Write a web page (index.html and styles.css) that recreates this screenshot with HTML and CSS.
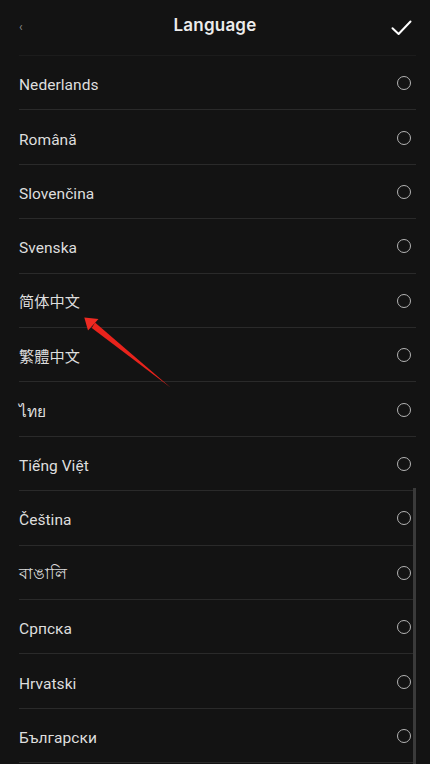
FILE: index.html
```html
<!DOCTYPE html>
<html lang="en">
<head>
<meta charset="utf-8">
<title>Language</title>
<link rel="stylesheet" href="styles.css">
</head>
<body>
<div class="screen">
  <header class="topbar">
    <span class="back">&#8249;</span>
    <h1 class="title">Language</h1>
    <svg class="done" width="22" height="18" viewBox="0 0 22 18"><path d="M2.5 9.3 L8.6 15 L20.5 2.5" fill="none" stroke="#ffffff" stroke-width="2" stroke-linecap="round" stroke-linejoin="round"/></svg>
  </header>
  <ul class="list">
    <li class="row"><span class="name">Nederlands</span><span class="radio"></span></li>
    <li class="row"><span class="name">Română</span><span class="radio"></span></li>
    <li class="row"><span class="name">Slovenčina</span><span class="radio"></span></li>
    <li class="row"><span class="name">Svenska</span><span class="radio"></span></li>
    <li class="row"><span class="name cjk">简体中文</span><span class="radio"></span></li>
    <li class="row"><span class="name cjk tc">繁體中文</span><span class="radio"></span></li>
    <li class="row"><span class="name">ไทย</span><span class="radio"></span></li>
    <li class="row"><span class="name">Tiếng Việt</span><span class="radio"></span></li>
    <li class="row"><span class="name">Čeština</span><span class="radio"></span></li>
    <li class="row"><span class="name">বাঙালি</span><span class="radio"></span></li>
    <li class="row"><span class="name">Српска</span><span class="radio"></span></li>
    <li class="row"><span class="name">Hrvatski</span><span class="radio"></span></li>
    <li class="row"><span class="name">Български</span><span class="radio"></span></li>
  </ul>
  <div class="scrollbar"></div>
  <svg class="annotation" width="430" height="764" viewBox="0 0 430 764">
    <path d="M170.5 387.5 L95 322.6 L91.8 328 Z" fill="#e8231c"/>
    <path d="M84.3 317.5 L98.5 319 L88 330.5 Z" fill="#ee2a22"/>
  </svg>
</div>
</body>
</html>
```
FILE: styles.css
```css
* { box-sizing: border-box; }
html, body {
  margin: 0;
  padding: 0;
  background: #131313;
}
body {
  font-family: Roboto, "Noto Sans", "Liberation Sans", sans-serif;
  color: #e2e2e2;
}
.screen {
  position: relative;
  width: 430px;
  height: 764px;
  overflow: hidden;
}
.topbar {
  height: 56px;
  margin: 0 14px 0 19px;
  display: flex;
  align-items: center;
  justify-content: space-between;
  border-bottom: 1px solid #1c1c1c;
  padding-bottom: 5px;
}
.back {
  color: #8a8a8a;
  font-size: 12px;
  width: 22px;
  line-height: 1;
  padding-top: 4px;
}
.title {
  margin: 0 0 0 -1px;
  font-family: Inter, "Open Sans", sans-serif;
  font-weight: 600;
  font-size: 17px;
  color: #ececec;
  letter-spacing: 0.2px;
}
.done {
  display: block;
  margin-right: 4px;
  margin-top: 6px;
}
.list {
  list-style: none;
  margin: 0 14px 0 19px;
  padding: 0;
}
.row {
  height: 54.42px;
  display: flex;
  align-items: center;
  justify-content: space-between;
  border-bottom: 1px solid #2a2a2a;
  padding-right: 5px;
}
.name {
  font-size: 15.5px;
  letter-spacing: 0.05px;
  color: #dedede;
  padding-top: 5px;
}
.cjk {
  font-family: "Noto Sans CJK SC", sans-serif;
  font-size: 15.2px;
  padding-top: 0;
}
.tc {
  font-family: "Noto Sans CJK TC", sans-serif;
}
.radio {
  width: 14px;
  height: 14px;
  border-radius: 50%;
  border: 1.5px solid #b4b4b4;
  margin-top: 1px;
}
.scrollbar {
  position: absolute;
  left: 413px;
  top: 488px;
  width: 3px;
  height: 276px;
  background: #3a3a3a;
}
.annotation {
  position: absolute;
  left: 0;
  top: 0;
  pointer-events: none;
}
```
